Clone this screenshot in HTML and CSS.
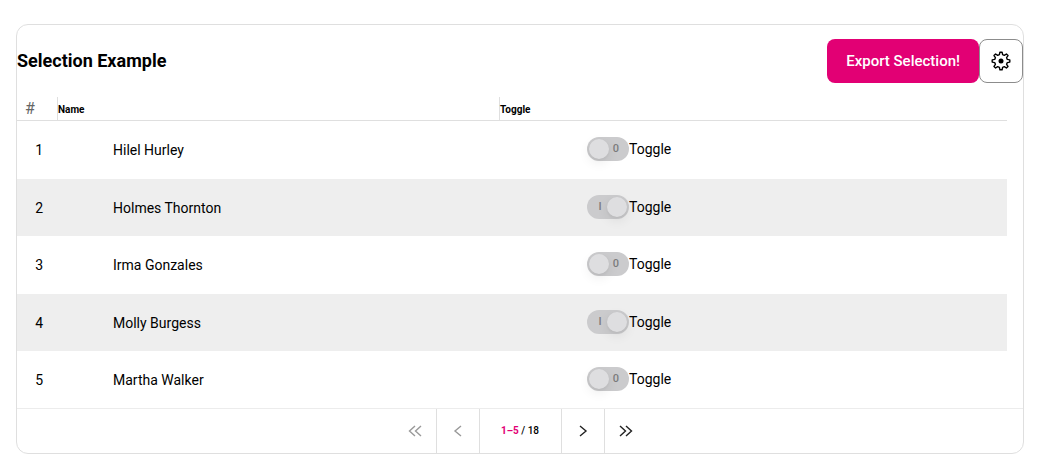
FILE: index.html
```html
<!DOCTYPE html>
<html lang="en">
<head>
<meta charset="utf-8">
<title>Selection Example</title>
<link rel="stylesheet" href="styles.css">
</head>
<body>
<main class="grid-card">
  <header class="toolbar">
    <h1 class="title">Selection Example</h1>
    <div class="actions">
      <button class="button primary" type="button">Export Selection!</button>
      <button class="button settings" type="button" aria-label="Table settings">
        <svg width="24" height="24" viewBox="0 0 24 24" aria-hidden="true">
          <path d="M10.9 3.2h2.2l.5 2.5 1.7.7 2.1-1.4 1.6 1.6-1.4 2.1.7 1.7 2.5.5v2.2l-2.500.5-.7 1.700 1.400 2.100-1.600 1.600-2.100-1.400-1.700.7-.5 2.500h-2.200l-.5-2.500-1.700-.7-2.100 1.400-1.600-1.600 1.400-2.100-.7-1.700-2.500-.5v-2.200l2.500-.5.7-1.700-1.400-2.100 1.600-1.600 2.100 1.400 1.700-.7z" fill="none" stroke="currentColor" stroke-width="1.4" stroke-linejoin="round"/>
          <circle cx="12" cy="12" r="2.5" fill="currentColor"/>
        </svg>
      </button>
    </div>
  </header>
  <div class="table-area">
    <table class="table">
      <thead>
        <tr><th class="col-number" scope="col">#</th><th class="col-name" scope="col">Name</th><th scope="col">Toggle</th></tr>
      </thead>
      <tbody>
        <tr><td class="number">1</td><td class="name">Hilel Hurley</td><td class="toggle"><label class="switch"><input type="checkbox" role="switch" disabled><span class="track"><span class="thumb"></span><span class="mark">0</span></span>Toggle</label></td></tr>
        <tr><td class="number">2</td><td class="name">Holmes Thornton</td><td class="toggle"><label class="switch"><input type="checkbox" role="switch" checked disabled><span class="track"><span class="thumb"></span><span class="mark">I</span></span>Toggle</label></td></tr>
        <tr><td class="number">3</td><td class="name">Irma Gonzales</td><td class="toggle"><label class="switch"><input type="checkbox" role="switch" disabled><span class="track"><span class="thumb"></span><span class="mark">0</span></span>Toggle</label></td></tr>
        <tr><td class="number">4</td><td class="name">Molly Burgess</td><td class="toggle"><label class="switch"><input type="checkbox" role="switch" checked disabled><span class="track"><span class="thumb"></span><span class="mark">I</span></span>Toggle</label></td></tr>
        <tr><td class="number">5</td><td class="name">Martha Walker</td><td class="toggle"><label class="switch"><input type="checkbox" role="switch" disabled><span class="track"><span class="thumb"></span><span class="mark">0</span></span>Toggle</label></td></tr>
      </tbody>
    </table>
  </div>
  <nav class="pagination" aria-label="Pagination">
    <button class="page-button" type="button" aria-label="First page" disabled><svg width="16" height="16" viewBox="0 0 16 16" aria-hidden="true"><path d="M8 3 2.5 8 8 13M14 3 8.5 8l5.5 5"/></svg></button>
    <button class="page-button" type="button" aria-label="Previous page" disabled><svg width="16" height="16" viewBox="0 0 16 16" aria-hidden="true"><path d="M11 3 5 8l6 5"/></svg></button>
    <span class="page-status"><span class="page-range">1–5</span> / 18</span>
    <button class="page-button" type="button" aria-label="Next page"><svg width="16" height="16" viewBox="0 0 16 16" aria-hidden="true"><path d="m5 3 6 5-6 5"/></svg></button>
    <button class="page-button" type="button" aria-label="Last page"><svg width="16" height="16" viewBox="0 0 16 16" aria-hidden="true"><path d="m2 3 5.5 5L2 13M8 3l5.5 5L8 13"/></svg></button>
  </nav>
</main>
</body>
</html>
```
FILE: styles.css
```css
* { box-sizing: border-box; }

body {
  margin: 0;
  padding: 24px 16px 16px;
  background: #fff;
  color: #000;
  font: 14px/20px Roboto, "Liberation Sans", sans-serif;
}

.grid-card {
  border: 1px solid #dfdfdf;
  border-radius: 12px;
}

.toolbar {
  display: flex;
  align-items: center;
  justify-content: space-between;
  padding: 14px 0;
}

.title {
  margin: 0;
  font-size: 18px;
  line-height: 24px;
  font-weight: 700;
}

.actions { display: flex; }

.button {
  height: 44px;
  border: 1px solid transparent;
  border-radius: 8px;
  font: inherit;
}

.primary {
  padding: 0 18px;
  background: #e20074;
  color: #fff;
  font-size: 15px;
  font-weight: 500;
}

.settings {
  display: grid;
  place-items: center;
  width: 44px;
  padding: 0;
  border-color: #8c8c8c;
  background: #fff;
  color: #000;
}

.table-area { padding-right: 16px; }

.table {
  width: 100%;
  border-collapse: separate;
  border-spacing: 0;
  table-layout: fixed;
}

.table th {
  height: 24px;
  padding: 3px 0 0;
  border-bottom: 1px solid #dfdfdf;
  font-size: 10px;
  line-height: 20px;
  font-weight: 700;
  text-align: left;
}

.table th + th { border-left: 1px solid #dfdfdf; }

.table th.col-number {
  width: 40px;
  padding: 0 0 0 8px;
  color: #666;
  font-size: 16px;
  font-weight: 400;
}

.col-name { width: 442px; }

.table td {
  height: 57px;
  padding: 0;
}

.table tr:nth-child(odd):not(:last-child) td { height: 58px; }

.table tbody tr:nth-child(even) { background: #eee; }

.table td.number { padding-right: 14px; text-align: right; }

.table td.name { padding-left: 56px; }

.table td.toggle { padding: 0 0 2px 88px; }

.switch {
  display: flex;
  align-items: center;
}

.switch input {
  position: absolute;
  opacity: 0;
  pointer-events: none;
}

.track {
  display: flex;
  align-items: center;
  width: 42px;
  height: 24px;
  padding: 2px;
  border-radius: 12px;
  background: #cbcbcd;
}

.thumb {
  width: 20px;
  height: 20px;
  border-radius: 50%;
  background: #dedee0;
  box-shadow: 0 4px 12px rgb(0 0 0 / 8%), 0 1px 3px rgb(0 0 0 / 5%);
}

.mark {
  width: 14px;
  color: #7b7b7d;
  font-size: 11px;
  font-weight: 500;
  text-align: center;
}

input:checked + .track { flex-direction: row-reverse; }

.pagination {
  display: flex;
  justify-content: center;
  height: 45px;
  border-top: 1px solid #ececec;
}

.page-button {
  box-sizing: content-box;
  display: grid;
  place-items: center;
  width: 42px;
  padding: 0;
  border: 0;
  background: none;
  color: #222;
}

.page-button:disabled { color: #999; }

.page-button svg {
  fill: none;
  stroke: currentColor;
  stroke-width: 1.4;
}

.page-button + .page-button { border-left: 1px solid #dfdfdf; }

.page-status {
  width: 83px;
  border: solid #dfdfdf;
  border-width: 0 1px;
  font-size: 10px;
  line-height: 44px;
  font-weight: 500;
  text-align: center;
}

.page-range {
  color: #e20074;
  font-weight: 700;
}
```
